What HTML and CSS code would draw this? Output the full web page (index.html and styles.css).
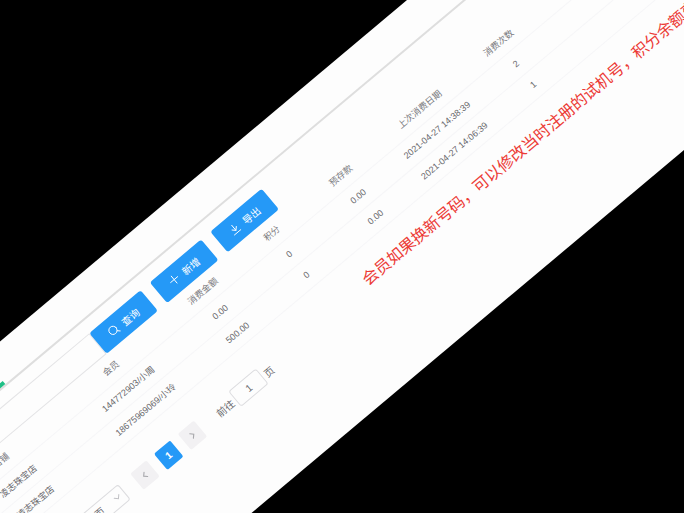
FILE: index.html
```
<!DOCTYPE html>
<html lang="zh-CN">
<head>
  <meta charset="UTF-8" />
  <meta name="viewport" content="width=device-width, initial-scale=1.0"/>
  <title>会员管理</title>
  <link rel="stylesheet" href="styles.css">
</head>
<body>

  <main class="panel">
    <div class="tabs">
      <div class="tab-active"></div>
    </div>

    <form class="toolbar">
      <input type="text" class="search" aria-label="会员">
      <button type="button" class="btn">
        <svg viewBox="0 0 12 12"><circle cx="5.5" cy="5.5" r="4.5"/><path d="M8.8 8.8l2.4 2.4"/></svg>
        查询
      </button>
      <button type="button" class="btn">
        <svg viewBox="0 0 12 12"><path d="M6 1v10M1 6h10"/></svg>
        新增
      </button>
      <button type="button" class="btn">
        <svg viewBox="0 0 12 12"><path d="M6 1v7M3 5.2l3 3 3-3M1.5 11h9"/></svg>
        导出
      </button>
    </form>

    <table class="members">
      <colgroup>
        <col class="c-shop">
        <col class="c-member">
        <col class="c-num">
        <col class="c-num">
        <col class="c-num">
        <col class="c-date">
        <col class="c-num">
        <col>
      </colgroup>
      <thead>
        <tr>
          <th>店铺</th>
          <th>会员</th>
          <th>消费金额</th>
          <th>积分</th>
          <th>预存款</th>
          <th>上次消费日期</th>
          <th>消费次数</th>
          <th></th>
        </tr>
      </thead>
      <tbody>
        <tr>
          <td>凌志珠宝店</td>
          <td>144772903/小周</td>
          <td>0.00</td>
          <td>0</td>
          <td>0.00</td>
          <td>2021-04-27 14:38:39</td>
          <td>2</td>
          <td></td>
        </tr>
        <tr>
          <td>凌志珠宝店</td>
          <td>18675969069/小玲</td>
          <td>500.00</td>
          <td>0</td>
          <td>0.00</td>
          <td>2021-04-27 14:06:39</td>
          <td>1</td>
          <td></td>
        </tr>
      </tbody>
    </table>

    <div class="footer">
      <nav class="pagination">
        <span class="size">
          <select aria-label="每页条数">
            <option>10条/页</option>
          </select>
          <svg viewBox="0 0 8 8"><path d="M1 2.5l3 3 3-3"/></svg>
        </span>
        <button type="button" class="page" aria-label="上一页"><svg viewBox="0 0 8 8"><path d="M5 1.5L2.5 4 5 6.5"/></svg></button>
        <button type="button" class="page current">1</button>
        <button type="button" class="page" aria-label="下一页"><svg viewBox="0 0 8 8"><path d="M3 1.5L5.5 4 3 6.5"/></svg></button>
        <label class="jump">前往<input type="text" value="1">页</label>
      </nav>
      <p class="notice">会员如果换新号码，可以修改当时注册的试机号，积分余额变更</p>
    </div>
  </main>

</body>
</html>
```
FILE: styles.css
```
* {
  box-sizing: border-box;
}

body {
  margin: 0;
  height: 100vh;
  display: grid;
  place-content: center;
  overflow: hidden;
  background: #000;
  color: #68686c;
  font-family: "Liberation Sans", "Noto Sans CJK SC", sans-serif;
  font-size: 9px;
}

input, select, button {
  font: inherit;
  color: inherit;
}

svg {
  fill: none;
  stroke: currentColor;
  stroke-linecap: round;
}

/* the whole panel is tilted and runs past both sides of the window */
.panel {
  width: 135vw;
  min-height: 293px;
  background: #fdfdfd;
  transform: rotate(-40deg) translate(1px, -8px);
}

.tabs {
  height: 38px;
  display: flex;
  align-items: flex-end;
  border-bottom: 2px solid #dedede;
}

.tab-active {
  width: 121px;
  height: 4px;
  background: #1fbf86;
}

.toolbar {
  display: flex;
  gap: 12px;
  padding-top: 13px;
}

.search {
  width: 218px;
  height: 27px;
  margin-right: -12px;
  border: 1px solid #e4e4e6;
  background: #fdfdfd;
}

.btn {
  display: flex;
  align-items: center;
  justify-content: center;
  gap: 6px;
  width: 67px;
  height: 27px;
  padding: 0;
  border: none;
  border-radius: 3px;
  background: #2599f7;
  color: #fff;
  font-size: 10px;
}

.btn svg {
  width: 11px;
  height: 11px;
}

.members {
  width: 100%;
  table-layout: fixed;
  border-collapse: collapse;
  text-align: center;
}

.c-shop { width: 137px; }
.c-member { width: 150px; }
.c-num { width: 90px; }
.c-date { width: 116px; }

.members th,
.members td {
  height: 27px;
  padding: 0;
  border-bottom: 1px solid #f6f6f8;
  white-space: nowrap;
}

.members th {
  font-weight: normal;
  color: #78787c;
}

.footer {
  display: flex;
  align-items: flex-start;
  padding-top: 19px;
}

.pagination {
  display: flex;
  align-items: center;
  gap: 10px;
  width: 462px;
  padding: 6px 0 0 71px;
  font-size: 10px;
}

.size {
  position: relative;
  width: 72px;
  margin-right: 6px;
}

.size select {
  appearance: none;
  width: 100%;
  height: 20px;
  padding: 0 10px;
  border: 1px solid #dcdcdf;
  border-radius: 3px;
  background: #fdfdfd;
}

.size svg {
  position: absolute;
  right: 5px;
  top: 6px;
  width: 8px;
  height: 8px;
  color: #c0c0c4;
}

.page {
  display: grid;
  place-items: center;
  width: 21px;
  height: 21px;
  padding: 0;
  border: none;
  border-radius: 2px;
  background: #f2f1f3;
  color: #a8a8ac;
}

.page svg {
  width: 9px;
  height: 9px;
}

.page.current {
  background: #2599f7;
  color: #fff;
  font-weight: bold;
}

.jump {
  display: flex;
  align-items: center;
  gap: 3px;
  margin-left: 12px;
}

.jump input {
  width: 36px;
  height: 20px;
  padding: 0;
  border: 1px solid #dcdcdf;
  border-radius: 3px;
  background: #fdfdfd;
  text-align: center;
}

.notice {
  margin: 0;
  color: #ec3a35;
  font-size: 16px;
  line-height: 20px;
  white-space: nowrap;
}
```
